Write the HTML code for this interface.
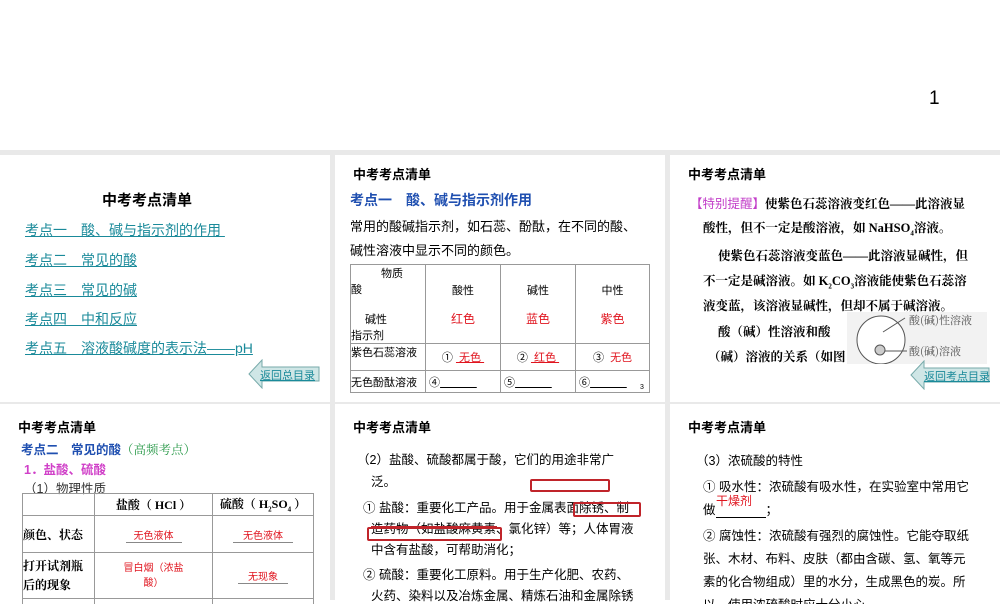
<!DOCTYPE html>
<html><head><meta charset="utf-8"><style>
*{margin:0;padding:0;box-sizing:border-box}
body{width:1000px;height:600px;background:#fff;position:relative;overflow:hidden;font-family:"Liberation Sans","Noto Sans CJK SC",sans-serif;color:#000}
.gray{position:absolute;left:0;top:150px;width:1000px;height:450px;background:#e9e9e9}
.p{position:absolute;background:#fff;overflow:hidden}
.a{position:absolute;white-space:nowrap}
.h{font-weight:bold;font-size:13px}
.lk{color:#1a8a9a;text-decoration:underline;font-size:14px}
.r{color:#e0141e}
.s{font-family:"Liberation Serif","Noto Serif CJK SC",serif;font-weight:bold;font-size:12.5px}
table{border-collapse:collapse;position:absolute}
td{border:1px solid #999;font-size:11px}
.btn{position:absolute}
</style></head><body>
<div class="a" style="left:929px;top:88px;font-size:19px">1</div>
<div class="gray"></div>

<!-- panel 1 -->
<div class="p" style="left:0;top:155px;width:330px;height:247px">
<div class="a" style="left:102px;top:34px;font-size:15px;font-weight:bold">中考考点清单</div>
<div class="a lk" style="left:25px;top:65px">考点一　酸、碱与指示剂的作用&nbsp;</div>
<div class="a lk" style="left:25px;top:95px">考点二　常见的酸</div>
<div class="a lk" style="left:25px;top:125px">考点三　常见的碱</div>
<div class="a lk" style="left:25px;top:154px">考点四　中和反应</div>
<div class="a lk" style="left:25px;top:183px">考点五　溶液酸碱度的表示法——pH</div>
<svg class="btn" style="left:248px;top:204px" width="72" height="30" viewBox="0 0 72 30"><polygon points="1,15 14,1 14,8 71,8 71,22 14,22 14,29" fill="#cfe6e6" stroke="#7aa" stroke-width="1"/><text x="12" y="20" font-size="11" fill="#1a8a9a" text-decoration="underline" font-family="Noto Sans CJK SC">返回总目录</text></svg>
</div>

<!-- panel 2 -->
<div class="p" style="left:335px;top:155px;width:330px;height:247px">
<div class="a h" style="left:18px;top:9px">中考考点清单</div>
<div class="a" style="left:15px;top:35px;font-size:14px;font-weight:bold;color:#1f4fb0">考点一　酸、碱与指示剂作用</div>
<div class="a" style="left:15px;top:61px;font-size:13px">常用的酸碱指示剂，如石蕊、酚酞，在不同的酸、</div>
<div class="a" style="left:15px;top:85px;font-size:13px">碱性溶液中显示不同的颜色。</div>
<table style="left:15px;top:109px;width:300px">
<tr style="height:70px"><td style="width:75px;position:relative;vertical-align:top"><div style="margin:0 0 0 30px">物质</div><div>酸</div><div style="margin:14px 0 0 14px">碱性</div><div>指示剂</div></td><td style="width:75px;text-align:center">酸性<br><br><span class="r" style="font-size:12px">红色</span></td><td style="width:75px;text-align:center">碱性<br><br><span class="r" style="font-size:12px">蓝色</span></td><td style="text-align:center">中性<br><br><span class="r" style="font-size:12px">紫色</span></td></tr>
<tr style="height:27px"><td style="vertical-align:top">紫色石蕊溶液</td><td style="text-align:center">① <span class="r" style="text-decoration:underline">&nbsp;无色&nbsp;</span></td><td style="text-align:center">② <span class="r" style="text-decoration:underline">&nbsp;红色&nbsp;</span></td><td style="text-align:center">③&nbsp; <span class="r">无色</span></td></tr>
<tr style="height:22px"><td>无色酚酞溶液</td><td>&nbsp;④<u>&nbsp;&nbsp;&nbsp;&nbsp;&nbsp;&nbsp;&nbsp;&nbsp;&nbsp;&nbsp;&nbsp;&nbsp;</u></td><td>&nbsp;⑤<u>&nbsp;&nbsp;&nbsp;&nbsp;&nbsp;&nbsp;&nbsp;&nbsp;&nbsp;&nbsp;&nbsp;&nbsp;</u></td><td>&nbsp;⑥<u>&nbsp;&nbsp;&nbsp;&nbsp;&nbsp;&nbsp;&nbsp;&nbsp;&nbsp;&nbsp;&nbsp;&nbsp;</u></td></tr>
</table>
<div class="a" style="left:305px;top:229px;font-size:7px">3</div>
</div>

<!-- panel 3 -->
<div class="p" style="left:670px;top:155px;width:330px;height:247px">
<div class="a h" style="left:18px;top:9px">中考考点清单</div>
<div class="a s" style="left:20px;top:38px"><span style="color:#c23dc8;font-family:'Noto Sans CJK SC';font-weight:normal">【特别提醒】</span>使紫色石蕊溶液变红色——此溶液显</div>
<div class="a s" style="left:33px;top:63px">酸性，但不一定是酸溶液，如 NaHSO<sub style="font-size:7px">4</sub>溶液。</div>
<div class="a s" style="left:48px;top:91px">使紫色石蕊溶液变蓝色——此溶液显碱性，但</div>
<div class="a s" style="left:33px;top:116px">不一定是碱溶液。如 K<sub style="font-size:7px">2</sub>CO<sub style="font-size:7px">3</sub>溶液能使紫色石蕊溶</div>
<div class="a s" style="left:33px;top:141px">液变蓝，该溶液显碱性，但却不属于碱溶液。</div>
<div class="a s" style="left:48px;top:167px">酸（碱）性溶液和酸</div>
<div class="a s" style="left:38px;top:192px">（碱）溶液的关系（如图</div>
<svg class="a" style="left:177px;top:157px" width="140" height="52"><rect width="140" height="52" fill="#f2f2f2"/><circle cx="34" cy="28" r="24" fill="#fff" stroke="#555"/><circle cx="33" cy="38" r="5" fill="#ccc" stroke="#555"/><line x1="36" y1="20" x2="58" y2="6" stroke="#555"/><line x1="38" y1="39" x2="60" y2="39" stroke="#555"/><text x="62" y="12" font-size="11" fill="#555" font-family="Noto Serif CJK SC">酸(碱)性溶液</text><text x="62" y="43" font-size="11" fill="#555" font-family="Noto Serif CJK SC">酸(碱)溶液</text></svg>
<svg class="btn" style="left:240px;top:205px" width="80" height="30" viewBox="0 0 80 30"><polygon points="1,15 14,1 14,8 79,8 79,22 14,22 14,29" fill="#cfe6e6" stroke="#7aa"/><text x="14" y="20" font-size="11" fill="#1a8a9a" text-decoration="underline" font-family="Noto Sans CJK SC">返回考点目录</text></svg>
</div>

<!-- row 2 panel 1 -->
<div class="p" style="left:0;top:404px;width:330px;height:200px">
<div class="a h" style="left:18px;top:13px">中考考点清单</div>
<div class="a" style="left:21px;top:35px;font-size:12.5px;font-weight:bold;color:#1f4fb0">考点二　常见的酸<span style="color:#2a9a4a;font-weight:normal;font-family:'Noto Serif CJK SC'">（高频考点）</span></div>
<div class="a" style="left:24px;top:55px;font-size:12.5px;font-weight:bold;color:#d040c8">1．盐酸、硫酸</div>
<div class="a" style="left:24px;top:74px;font-size:12.5px;color:#333">（1）物理性质</div>
<table style="left:22px;top:89px;width:292px">
<tr style="height:22px"><td style="width:72px"></td><td class="s" style="width:118px;text-align:center;font-size:12px">盐酸（ HCl ）</td><td class="s" style="text-align:center;font-size:12px">硫酸（ H<sub style="font-size:7px">2</sub>SO<sub style="font-size:7px">4</sub> ）</td></tr>
<tr style="height:37px"><td class="s" style="font-size:12px">颜色、状态</td><td style="text-align:center"><span class="r" style="font-size:10px;border-bottom:1px solid #888;padding:0 8px">无色液体</span></td><td style="text-align:center"><span class="r" style="font-size:10px;border-bottom:1px solid #888;padding:0 10px">无色液体</span></td></tr>
<tr style="height:46px"><td class="s" style="font-size:12px;line-height:19px">打开试剂瓶<br>后的现象</td><td style="text-align:center;font-size:10px;line-height:15px" class="r">冒白烟（浓盐<br>酸）</td><td style="text-align:center"><span class="r" style="font-size:10px;border-bottom:1px solid #888;padding:0 10px">无现象</span></td></tr>
<tr style="height:20px"><td></td><td></td><td></td></tr>
</table>
</div>

<!-- row 2 panel 2 -->
<div class="p" style="left:335px;top:404px;width:330px;height:200px">
<div class="a h" style="left:18px;top:13px">中考考点清单</div>
<div class="a" style="left:22px;top:45px;font-size:12.5px">（2）盐酸、硫酸都属于酸，它们的用途非常广</div>
<div class="a" style="left:36px;top:67px;font-size:12.5px">泛。</div>
<div class="a" style="left:28px;top:93px;font-size:12.5px">① 盐酸：重要化工产品。用于金属表面除锈、制</div>
<div class="a" style="left:36px;top:114px;font-size:12.5px">造药物（如盐酸麻黄素、氯化锌）等；人体胃液</div>
<div class="a" style="left:36px;top:135px;font-size:12.5px">中含有盐酸，可帮助消化；</div>
<div class="a" style="left:28px;top:160px;font-size:12.5px">② 硫酸：重要化工原料。用于生产化肥、农药、</div>
<div class="a" style="left:36px;top:181px;font-size:12.5px">火药、染料以及冶炼金属、精炼石油和金属除锈</div>
<div class="a" style="left:195px;top:75px;width:80px;height:13px;border:2px solid #c0242a;border-radius:2px"></div>
<div class="a" style="left:238px;top:98px;width:68px;height:15px;border:2px solid #c0242a;border-radius:2px"></div>
<div class="a" style="left:32px;top:123px;width:135px;height:14px;border:2px solid #c0242a;border-radius:2px"></div>
<div class="a" style="left:36px;top:122px;width:126px;height:2px;background:#c0242a"></div>
</div>

<!-- row 2 panel 3 -->
<div class="p" style="left:670px;top:404px;width:330px;height:200px">
<div class="a h" style="left:18px;top:13px">中考考点清单</div>
<div class="a" style="left:26px;top:46px;font-size:12.5px">（3）浓硫酸的特性</div>
<div class="a" style="left:33px;top:72px;font-size:12.5px">① 吸水性：浓硫酸有吸水性，在实验室中常用它</div>
<div class="a" style="left:33px;top:95px;font-size:12.5px">做<span style="display:inline-block;width:50px;border-bottom:1px solid #000">&nbsp;</span>；</div>
<div class="a r" style="left:46px;top:88px;font-size:12px">干燥剂</div>
<div class="a" style="left:33px;top:121px;font-size:12.5px">② 腐蚀性：浓硫酸有强烈的腐蚀性。它能夺取纸</div>
<div class="a" style="left:33px;top:144px;font-size:12.5px">张、木材、布料、皮肤（都由含碳、氢、氧等元</div>
<div class="a" style="left:33px;top:167px;font-size:12.5px">素的化合物组成）里的水分，生成黑色的炭。所</div>
<div class="a" style="left:33px;top:190px;font-size:12.5px">以，使用浓硫酸时应十分小心</div>
</div>
</body></html>
